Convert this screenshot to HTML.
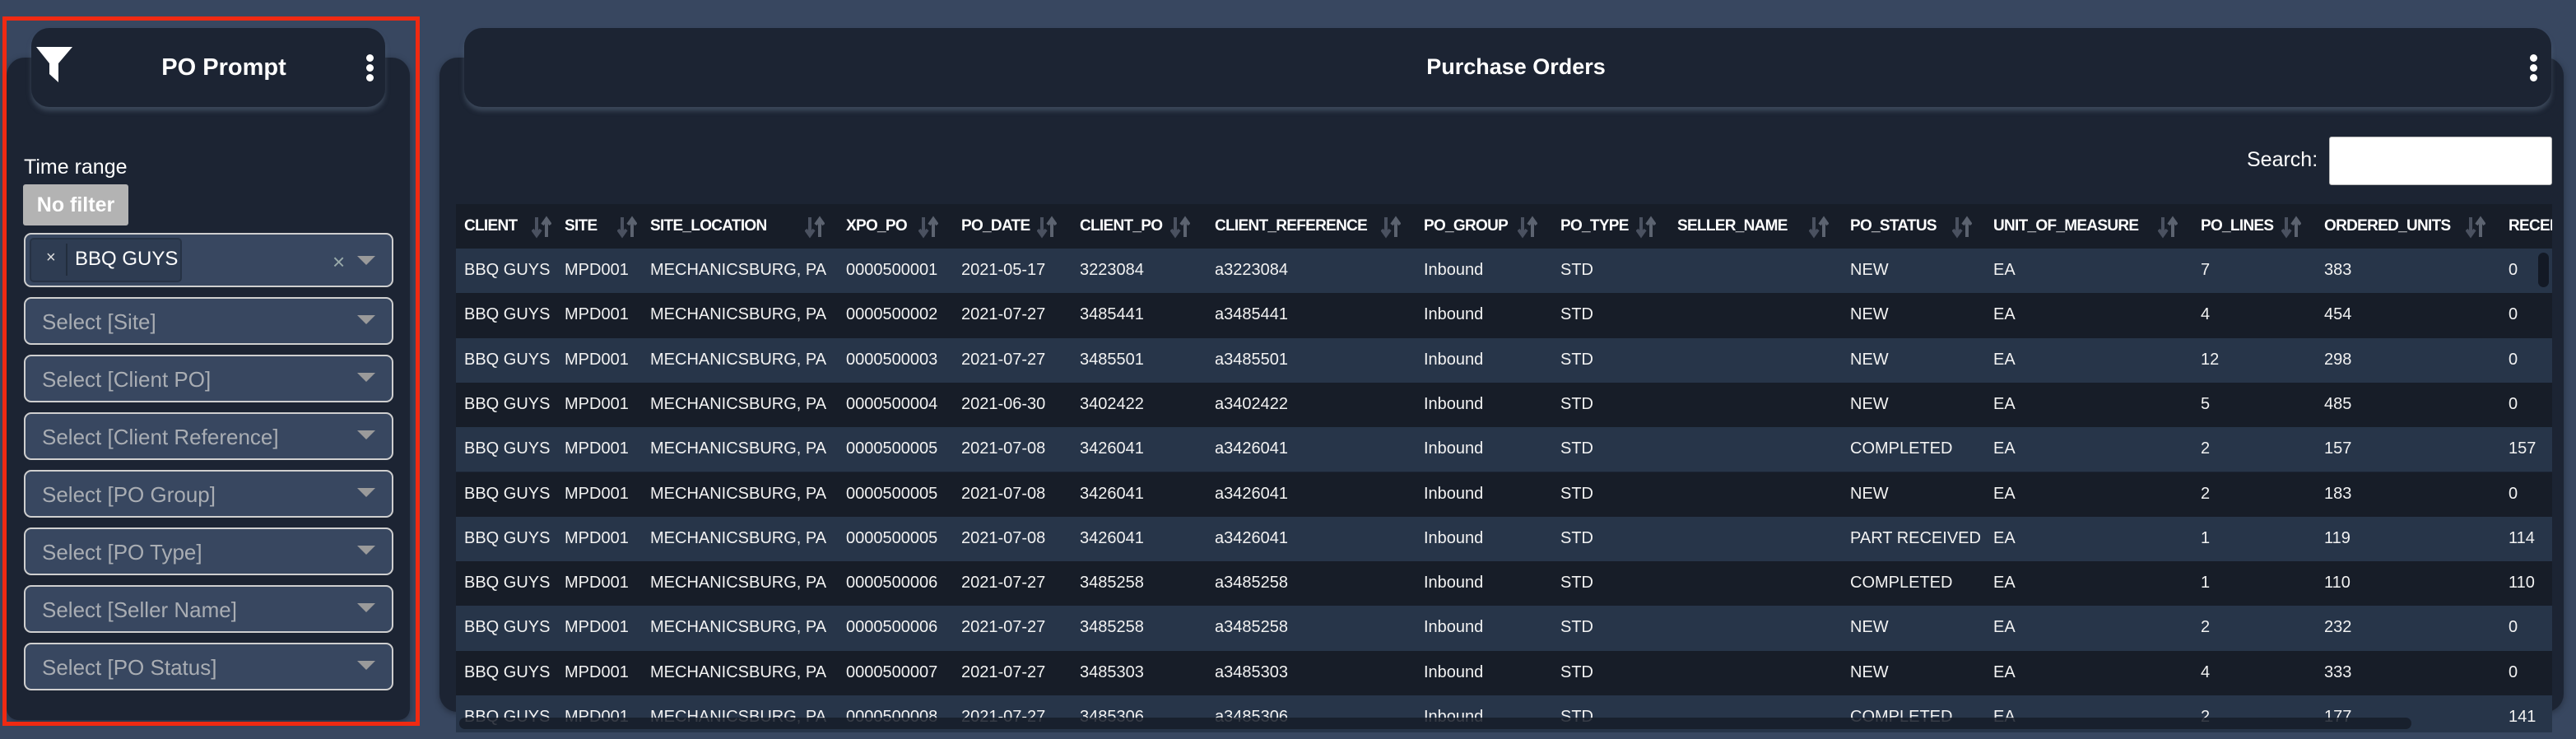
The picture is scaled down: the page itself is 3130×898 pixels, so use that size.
<!DOCTYPE html>
<html><head><meta charset="utf-8"><style>
*{margin:0;padding:0;box-sizing:border-box}
body{width:3130px;height:898px;background:#384760;position:relative;overflow:hidden;font-family:"Liberation Sans",sans-serif;color:#fff}
.abs{position:absolute}
.red{left:3px;top:20px;width:507px;height:862px;border:5px solid #f02a12}
.panel{background:#1c2433;border-radius:22px;box-shadow:0 2px 8px rgba(0,0,0,.35)}
.hdr{background:#1c2433;border-radius:22px;box-shadow:0 5px 6px rgba(80,95,115,.6)}
.sel{left:29px;width:449px;height:58px;border:2px solid #cfcfcf;border-radius:9px;background:#384760}
.sel .ph{position:absolute;left:20px;top:13px;font-size:26px;color:#a9adb3}
.sel .ar{position:absolute;right:20px;top:20px;width:0;height:0;border-left:11px solid transparent;border-right:11px solid transparent;border-top:11px solid #9a9a9a}
.dots{width:8px}
.dots i{display:block;width:9px;height:9px;border-radius:50%;background:#fff;margin-bottom:3px}
.row{position:absolute;left:554px;width:2547px;height:54.3px}
.row span{position:absolute;top:15px;font-size:20px;white-space:nowrap;color:#f2f2f2}
.th span{position:absolute;top:16px;font-size:19px;font-weight:bold;white-space:nowrap;color:#fff;letter-spacing:-0.7px}
.th svg{position:absolute;top:14px}
</style></head><body>
<div class="abs panel" style="left:8px;top:70px;width:490px;height:805px;border-radius:22px 22px 14px 14px"></div>
<div class="abs hdr" style="left:38px;top:34px;width:430px;height:96px"></div>
<svg class="abs" style="left:43px;top:56px" width="46" height="45" viewBox="0 0 46 45"><path d="M1 1 H45 L28 21 V44 L17 34 V21 Z" fill="#fff"/></svg>
<div class="abs" style="left:160px;top:66px;width:224px;text-align:center;font-size:29px;font-weight:bold">PO Prompt</div>
<div class="abs dots" style="left:445px;top:66px"><i></i><i></i><i></i></div>
<div class="abs" style="left:29px;top:189px;font-size:25px;color:#fff">Time range</div>
<div class="abs" style="left:28px;top:224px;width:128px;height:50px;background:#b3b3b3;border-radius:3px;font-size:25px;font-weight:bold;color:#fff;text-align:center;line-height:50px">No filter</div>
<div class="abs sel" style="top:283px;height:66px">
 <div class="abs" style="left:5px;top:4px;width:185px;height:54px;background:#2e3c52;border:2px solid #263244;border-radius:5px"></div>
 <div class="abs" style="left:25px;top:17px;font-size:20px;color:#ddd">×</div>
 <div class="abs" style="left:49px;top:11px;width:2px;height:39px;background:#222d3d"></div>
 <div class="abs" style="left:60px;top:16px;font-size:24px;color:#fff">BBQ GUYS</div>
 <div class="abs" style="left:373px;top:18px;font-size:26px;color:#9aa">×</div>
 <div class="ar" style="top:26px"></div>
</div>
<div class="abs sel" style="top:361px"><span class="ph">Select [Site]</span><span class="ar"></span></div>
<div class="abs sel" style="top:431px"><span class="ph">Select [Client PO]</span><span class="ar"></span></div>
<div class="abs sel" style="top:501px"><span class="ph">Select [Client Reference]</span><span class="ar"></span></div>
<div class="abs sel" style="top:571px"><span class="ph">Select [PO Group]</span><span class="ar"></span></div>
<div class="abs sel" style="top:641px"><span class="ph">Select [PO Type]</span><span class="ar"></span></div>
<div class="abs sel" style="top:711px"><span class="ph">Select [Seller Name]</span><span class="ar"></span></div>
<div class="abs sel" style="top:781px"><span class="ph">Select [PO Status]</span><span class="ar"></span></div>
<div class="abs red"></div>

<div class="abs panel" style="left:534px;top:70px;width:2581px;height:795px"></div>
<div class="abs hdr" style="left:564px;top:34px;width:2536px;height:96px"></div>
<div class="abs" style="left:1642px;top:66px;width:400px;text-align:center;font-size:27px;font-weight:bold">Purchase Orders</div>
<div class="abs dots" style="left:3074px;top:66px"><i></i><i></i><i></i></div>
<div class="abs" style="left:2730px;top:180px;font-size:25px;color:#fff">Search:</div>
<div class="abs" style="left:2830px;top:166px;width:271px;height:59px;background:#fff;border:1px solid #bbb;border-radius:3px"></div>

<div id="th"></div>
<div id="rows"></div>
<script>
var ic='<svg width="24" height="28" viewBox="0 0 24 28"><path d="M6 2v20M1 17l5 7 5-7" stroke="#4a5160" stroke-width="4" fill="none"/><path d="M18 26V6M13 11l5-7 5 7" stroke="#5c6370" stroke-width="4" fill="none"/></svg>';
var cols=[["CLIENT",10,92],["SITE",132,196],["SITE_LOCATION",236,424],["XPO_PO",474,562],["PO_DATE",614,706],["CLIENT_PO",758,868],["CLIENT_REFERENCE",922,1124],["PO_GROUP",1176,1290],["PO_TYPE",1342,1434],["SELLER_NAME",1484,1644],["PO_STATUS",1694,1818],["UNIT_OF_MEASURE",1868,2068],["PO_LINES",2120,2218],["ORDERED_UNITS",2270,2442],["RECEIVED_UNITS",2494,0]];
var s='<div class="abs" style="left:554px;top:248px;width:2547px;height:54px;overflow:hidden"><div class="row th" style="left:0;top:0;height:54px;background:#171d28">';
cols.forEach(function(c){s+='<span style="left:'+c[1]+'px">'+c[0]+'</span>';if(c[2])s+='<svg style="left:'+c[2]+'px" width="24" height="28" viewBox="0 0 24 28">'+ic.replace(/^<svg[^>]*>|<\/svg>$/g,'')+'</svg>';});
s+='</div></div>';
document.getElementById('th').outerHTML=s;
var d=[["0000500001","2021-05-17","3223084","NEW","7","383","0"],
["0000500002","2021-07-27","3485441","NEW","4","454","0"],
["0000500003","2021-07-27","3485501","NEW","12","298","0"],
["0000500004","2021-06-30","3402422","NEW","5","485","0"],
["0000500005","2021-07-08","3426041","COMPLETED","2","157","157"],
["0000500005","2021-07-08","3426041","NEW","2","183","0"],
["0000500005","2021-07-08","3426041","PART RECEIVED","1","119","114"],
["0000500006","2021-07-27","3485258","COMPLETED","1","110","110"],
["0000500006","2021-07-27","3485258","NEW","2","232","0"],
["0000500007","2021-07-27","3485303","NEW","4","333","0"],
["0000500008","2021-07-27","3485306","COMPLETED","2","177","141"]];
var h='<div class="abs" style="left:554px;top:302px;width:2547px;height:588px;overflow:hidden">';
for(var i=0;i<d.length;i++){var r=d[i];var t=i*54.3;
h+='<div class="row" style="left:0;top:'+t+'px;background:'+(i%2?'#171d28':'#273549')+'">'+
'<span style="left:10px">BBQ GUYS</span><span style="left:132px">MPD001</span><span style="left:236px">MECHANICSBURG, PA</span>'+
'<span style="left:474px">'+r[0]+'</span><span style="left:614px">'+r[1]+'</span><span style="left:758px">'+r[2]+'</span>'+
'<span style="left:922px">a'+r[2]+'</span><span style="left:1176px">Inbound</span><span style="left:1342px">STD</span>'+
'<span style="left:1694px">'+r[3]+'</span><span style="left:1868px">EA</span><span style="left:2120px">'+r[4]+'</span>'+
'<span style="left:2270px">'+r[5]+'</span><span style="left:2494px">'+r[6]+'</span></div>';}
h+='<div class="abs" style="left:4px;top:570px;width:2372px;height:14px;border-radius:7px;background:rgba(22,28,40,.85)"></div>';
h+='<div class="abs" style="left:2530px;top:5px;width:13px;height:42px;border-radius:7px;background:#131925"></div>';
h+='</div>';
document.getElementById('rows').outerHTML=h;
</script>
</body></html>
